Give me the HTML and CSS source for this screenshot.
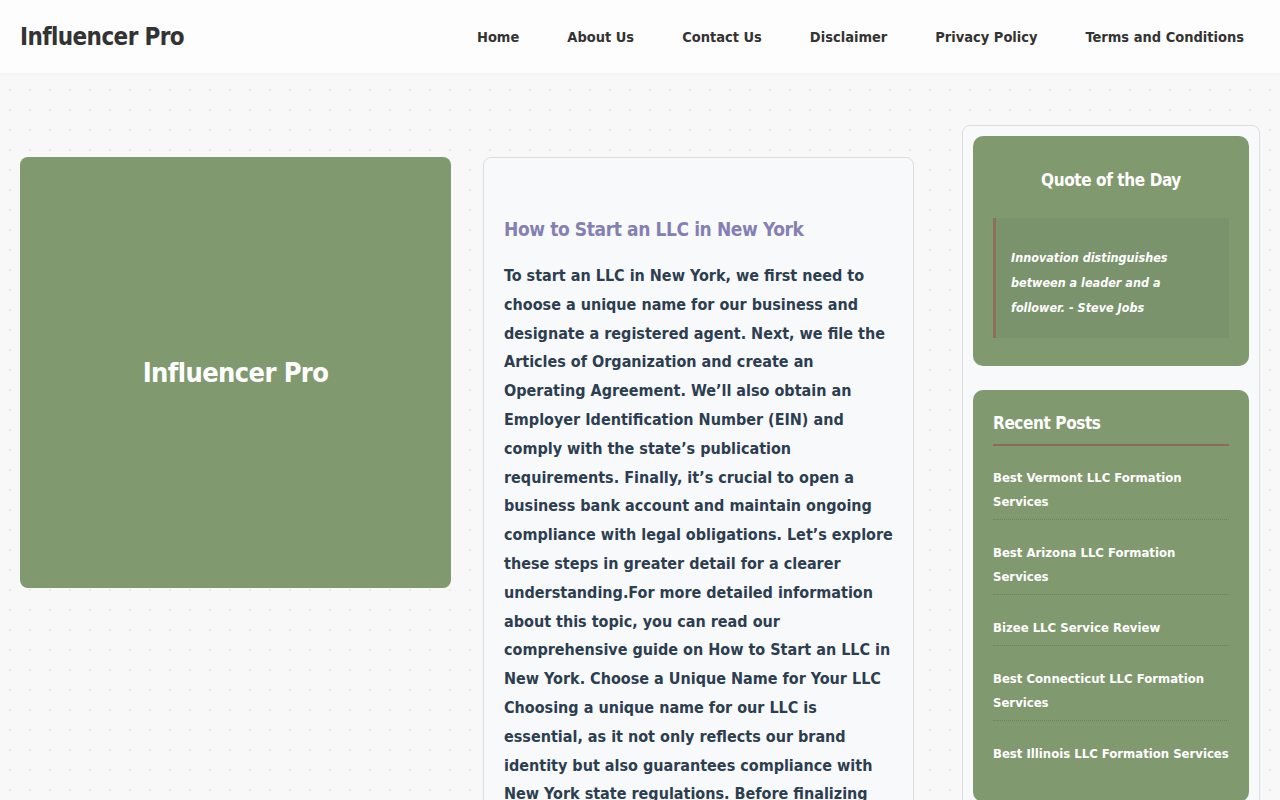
FILE: index.html
```html
<!DOCTYPE html>
<html lang="en">
<head>
    <meta charset="UTF-8">
    <meta name="viewport" content="width=device-width, initial-scale=1.0">
    <title>Influencer Pro</title>
    <link rel="stylesheet" href="styles.css">
</head>
<body>
    <header class="site-header">
        <a class="site-title" href="#">Influencer Pro</a>
        <nav class="main-nav">
            <a href="#">Home</a>
            <a href="#">About Us</a>
            <a href="#">Contact Us</a>
            <a href="#">Disclaimer</a>
            <a href="#">Privacy Policy</a>
            <a href="#">Terms and Conditions</a>
        </nav>
    </header>

    <main class="layout">
        <div class="thumb">
            <span>Influencer Pro</span>
        </div>

        <article class="post">
            <h2 class="post-title">How to Start an LLC in New York</h2>
            <p class="post-text">To start an LLC in New York, we first need to choose a unique name for our business and designate a registered agent. Next, we file the Articles of Organization and create an Operating Agreement. We’ll also obtain an Employer Identification Number (EIN) and comply with the state’s publication requirements. Finally, it’s crucial to open a business bank account and maintain ongoing compliance with legal obligations. Let’s explore these steps in greater detail for a clearer understanding.For more detailed information about this topic, you can read our comprehensive guide on How to Start an LLC in New York. Choose a Unique Name for Your LLC Choosing a unique name for our LLC is essential, as it not only reflects our brand identity but also guarantees compliance with New York state regulations. Before finalizing our name, we should check availability with the state database.</p>
        </article>

        <aside class="sidebar">
            <section class="widget quote">
                <h3 class="widget-title centered">Quote of the Day</h3>
                <blockquote>Innovation distinguishes between a leader and a follower. - Steve Jobs</blockquote>
            </section>
            <section class="widget">
                <h3 class="widget-title underlined">Recent Posts</h3>
                <ul class="recent">
                    <li><a href="#">Best Vermont LLC Formation Services</a></li>
                    <li><a href="#">Best Arizona LLC Formation Services</a></li>
                    <li><a href="#">Bizee LLC Service Review</a></li>
                    <li><a href="#">Best Connecticut LLC Formation Services</a></li>
                    <li><a href="#">Best Illinois LLC Formation Services</a></li>
                </ul>
            </section>
        </aside>
    </main>
</body>
</html>
```

FILE: styles.css
```css
body {
    margin: 0;
    font-family: 'DejaVu Sans Condensed', 'DejaVu Sans', sans-serif;
    color: #2c3e50;
    background-color: #f8f8f8;
    background-image: radial-gradient(#e9e9e9 0.8px, transparent 0.8px);
    background-size: 20px 20px;
}
a {
    text-decoration: none;
    color: inherit;
}
.site-header {
    display: flex;
    align-items: center;
    justify-content: space-between;
    height: 73px;
    padding: 0 12px 0 20px;
    background: #fdfdfd;
    box-shadow: 0 1px 3px rgba(0, 0, 0, 0.03);
}
.site-title {
    font-size: 24px;
    font-weight: bold;
    letter-spacing: -0.6px;
    color: #333;
}
.main-nav {
    display: flex;
}
.main-nav a {
    padding: 0 24px;
    font-size: 14.5px;
    font-weight: bold;
    color: #333;
}
.layout {
    display: grid;
    grid-template-columns: 431px 431px 1fr;
    column-gap: 32px;
    align-items: start;
    padding: 52px 20px 0;
}
.thumb {
    display: flex;
    align-items: center;
    justify-content: center;
    height: 431px;
    margin-top: 32px;
    background: #81996f;
    border-radius: 8px;
}
.thumb span {
    font-size: 27px;
    font-weight: bold;
    letter-spacing: -0.6px;
    color: #fff;
}
.post {
    margin-top: 32px;
    padding: 56px 20px 20px;
    background: #f8f9fa;
    border: 1px solid #dddddd;
    border-radius: 8px;
    min-height: 700px;
}
.post-title {
    margin: 0 0 18px;
    font-size: 19px;
    line-height: 30px;
    letter-spacing: -0.4px;
    color: #8580b3;
}
.post-text {
    margin: 0;
    font-size: 16px;
    font-weight: bold;
    line-height: 28.8px;
    color: #2c3e50;
}
.sidebar {
    margin-left: 16px;
    padding: 10px;
    background: #f8f9fa;
    border: 1px solid #dddddd;
    border-radius: 8px;
    min-height: 700px;
}
.widget {
    margin-bottom: 24px;
    padding: 20px;
    background: #81996f;
    border-radius: 10px;
    color: #fff;
}
.widget-title {
    margin: 0;
    font-size: 17px;
    line-height: 26px;
    letter-spacing: -0.4px;
    color: #fff;
}
.centered {
    text-align: center;
    margin: 11px 0 25px;
}
.underlined {
    padding-bottom: 8px;
    border-bottom: 2px solid #8c6b58;
}
.quote blockquote {
    margin: 0 0 8px;
    padding: 27px 16px 18px 15px;
    background: #7b936c;
    border-left: 3px solid #8c7059;
    font-size: 12.5px;
    font-weight: bold;
    font-style: italic;
    line-height: 25px;
}
.recent {
    list-style: none;
    margin: 10px 0 0;
    padding: 0;
}
.recent li {
    padding: 10px 0 5px;
    margin-bottom: 11px;
    border-bottom: 1px dotted #6c8360;
    font-size: 13px;
    font-weight: bold;
    line-height: 24px;
}
.recent li:last-child {
    border-bottom: none;
}
```
